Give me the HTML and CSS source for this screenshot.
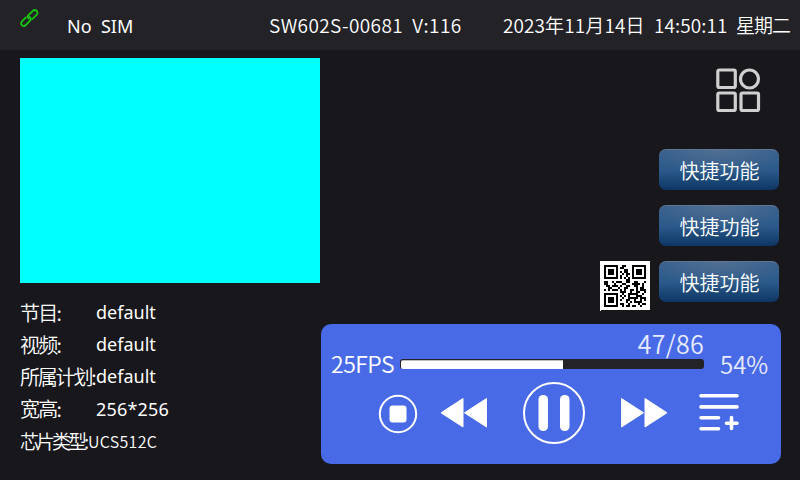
FILE: index.html
```
<!DOCTYPE html>
<html lang="zh-CN">
<head>
<meta charset="utf-8">
<title>SW602S</title>
<link rel="stylesheet" href="styles.css">
</head>
<body>
<header class="topbar">
  <svg class="link" viewBox="0 0 20 20"><g fill="none" stroke="#16c60c" stroke-width="1.8" stroke-linecap="round"><path d="M8.5 9.5C7.3 8.3 7.6 7 8.6 6L12.6 2.1C13.8 1 15.6.9 16.7 2S17.7 4.8 16.6 5.9L12.6 9.8"/><path d="M9.8 8C11.1 9.4 11 10.8 9.9 11.9L5.9 16C4.7 17.2 3 17.300 1.900 16.200S.9 13.400 2 12.300L5.800 8.500"/></g></svg>
  <span class="sim">No&nbsp; SIM</span>
  <span class="device">SW602S-00681&nbsp; V:116</span>
  <span class="clock"><span class="date">2023年11月14日</span><span class="time">14:50:11</span><span class="day">星期二</span></span>
</header>
<main class="main">
  <section class="left">
    <div class="preview"></div>
    <dl class="info">
      <div class="row"><dt>节目:</dt><dd>default</dd></div>
      <div class="row"><dt>视频:</dt><dd>default</dd></div>
      <div class="row plan"><dt>所属计划:</dt><dd>default</dd></div>
      <div class="row"><dt>宽高:</dt><dd class="size">256*256</dd></div>
      <div class="row chip"><dt>芯片类型:</dt><dd>UCS512C</dd></div>
    </dl>
  </section>
  <section class="right">
    <div class="upper">
      <svg class="qr" id="qr" viewBox="0 0 50 50" shape-rendering="crispEdges"></svg>
      <div class="actions">
        <svg class="apps" viewBox="0 0 46 46"><g fill="none" stroke="#cfcfcf" stroke-width="3.200"><rect x="1.800" y="2" width="17.500" height="17.500" rx="1.500"/><circle cx="33.500" cy="11" r="9"/><rect x="1.800" y="25" width="17.500" height="17.500" rx="1.500"/><rect x="25" y="25" width="17.500" height="17.500" rx="1.500"/></g></svg>
        <button class="quick">快捷功能</button>
        <button class="quick">快捷功能</button>
        <button class="quick">快捷功能</button>
      </div>
    </div>
    <div class="player">
      <div class="status">
        <span class="fps">25FPS</span>
        <div class="progress"><span class="frames">47/86</span><div class="track"><div class="fill"></div></div></div>
        <span class="percent">54%</span>
      </div>
      <div class="controls">
        <svg class="stop" viewBox="0 0 40 40"><circle cx="20" cy="20" r="18.200" fill="none" stroke="#fff" stroke-width="2"/><rect x="11.500" y="11.500" width="17" height="17" rx="3" fill="#fff"/></svg>
        <svg class="rewind" viewBox="0 0 48 32"><path d="M1 15.800L23 1.500V30ZM24.500 15.800L46.500 1.500V30Z" fill="#fff" stroke="#fff" stroke-linejoin="round"/></svg>
        <svg class="pause" viewBox="0 0 64 64"><circle cx="32" cy="32" r="30" fill="none" stroke="#fff" stroke-width="2"/><rect x="16.500" y="14" width="9.500" height="36" rx="4.500" fill="#fff"/><rect x="38" y="14" width="9.500" height="36" rx="4.500" fill="#fff"/></svg>
        <svg class="forward" viewBox="0 0 48 32"><path d="M1.500 1.500L23.500 15.800L1.500 30ZM25 1.500L47 15.800L25 30Z" fill="#fff" stroke="#fff" stroke-linejoin="round"/></svg>
        <svg class="list" viewBox="0 0 42 40"><path d="M3 3.800H39M3 14.900H39M3 25.700H20.500M3 36.800H20.500M28.500 31.300H39M33.500 25.500V36.500" stroke="#fff" stroke-width="3.600" stroke-linecap="round"/></svg>
      </div>
    </div>
  </section>
</main>
<script src="qr.js"></script>
</body>
</html>
```
FILE: styles.css
```
* { box-sizing: border-box; margin: 0; padding: 0; }
body {
  width: 800px; height: 480px; overflow: hidden;
  background: #18171c; color: #fff;
  font: 350 19px/24px "Noto Sans CJK SC", "Noto Sans", sans-serif;
  white-space: nowrap;
}
svg { display: block; flex: none; }
.topbar { height: 50px; display: flex; background: #232227; padding-top: 13px; }
.link { width: 20px; height: 20px; margin: -4px 0 0 20px; }
.sim { width: 202px; margin-left: 27px; padding-top: 1px; font: 400 18px/24px "Noto Sans", sans-serif; }
.device { width: 234px; letter-spacing: .4px; }
.clock { width: 297px; display: flex; }
.date { width: 151px; letter-spacing: .1px; }
.time { width: 82px; letter-spacing: .1px; }
.day { letter-spacing: -1px; }
.main { display: flex; padding: 8px 19px 0 20px; }
.left { width: 300px; }
.preview { height: 225px; background: #0ff; }
.info { padding-top: 13px; }
.row { display: flex; height: 32px; line-height: 32px; }
dt { width: 76px; flex: none; padding-top: 1px; font-size: 20px; letter-spacing: -1.700px; }
dd { font-family: "Noto Sans", sans-serif; font-size: 18px; font-weight: 400; }
.size { padding-top: 1px; letter-spacing: .2px; }
.plan dt { letter-spacing: -2.200px; }
.chip dt { width: 68px; font-size: 19px; letter-spacing: -3px; }
.chip dd { padding-top: 1px; font: 350 16px/32px "Noto Sans CJK SC", sans-serif; letter-spacing: .3px; }
.right { width: 460px; margin-left: 1px; }
.upper { height: 266px; display: flex; justify-content: flex-end; align-items: flex-start; padding-right: 2px; }
.qr { width: 50px; height: 50px; margin: 203px 9px 0 0; }
.actions { width: 120px; padding-top: 10px; }
.apps { width: 46px; height: 46px; margin: 0 0 35px 57px; }
.quick {
  display: block; width: 120px; height: 41px; margin-bottom: 15px;
  border: 0; border-top: 1px solid #5d7696; border-radius: 7px; padding: 2px 0 0 1px;
  background: radial-gradient(ellipse 75px 24px at 50% 0, rgba(120,135,155,.4), transparent), linear-gradient(#365f8d, #2b5a8a 50%, #143f6e 88%, #0d3564);
  color: #fff; font: 350 20px/38px "Noto Sans CJK SC", sans-serif;
}
.player { height: 140px; border-radius: 10px; background: #496ae7; }
.status { height: 58px; display: flex; }
.fps { width: 79px; padding: 27px 0 0 10px; font-size: 23px; letter-spacing: -.5px; }
.progress { width: 304px; }
.frames { display: block; height: 35px; padding-top: 7px; text-align: right; font-size: 25px; letter-spacing: .3px; color: #e7ebff; }
.track { height: 10px; background: #232227; border-radius: 3px; padding: 1px 0 0 1px; }
.fill { height: 9px; width: 162px; background: #fff; border-radius: 2px 0 0 2px; border-top: 1px solid #bbb; }
.percent { padding: 28px 0 0 16px; font-size: 24px; color: #e7ebff; }
.controls { display: flex; align-items: flex-start; }
.stop { width: 40px; height: 40px; margin: 12px 0 0 57px; }
.rewind { width: 48px; height: 32px; margin: 15px 0 0 22px; }
.pause { width: 64px; height: 64px; margin: -1px 0 0 34px; }
.forward { width: 48px; height: 32px; margin: 15px 0 0 34px; }
.list { width: 42px; height: 40px; margin: 10px 0 0 30px; }
```
FILE: qr.js
```
const rows = [
  "111111100110001111111",
  "100000101100001000001",
  "101110100011001011101",
  "101110101011001011101",
  "101110100101101011101",
  "100000101001001000001",
  "111111101010101111111",
  "000000000001100000000",
  "110010111001100110001",
  "110001000110001111010",
  "011011101001100110010",
  "001100010011000010110",
  "101011101010011010111",
  "000000001110010011001",
  "111111100100111110010",
  "100000101010100011100",
  "101110100100111110111",
  "101110101001100100101",
  "101110100001010111100",
  "100000101100100001011",
  "111111100101101100100"
];
let d = "";
rows.forEach((r, y) => [...r].forEach((v, x) => {
  if (v === "1") d += `M${4 + x * 2} ${4 + y * 2}h2v2h-2z`;
}));
document.getElementById("qr").innerHTML =
  `<path fill="#fff" d="M0 0h50v49H1v1H0z"/><path d="${d}"/>`;
```
